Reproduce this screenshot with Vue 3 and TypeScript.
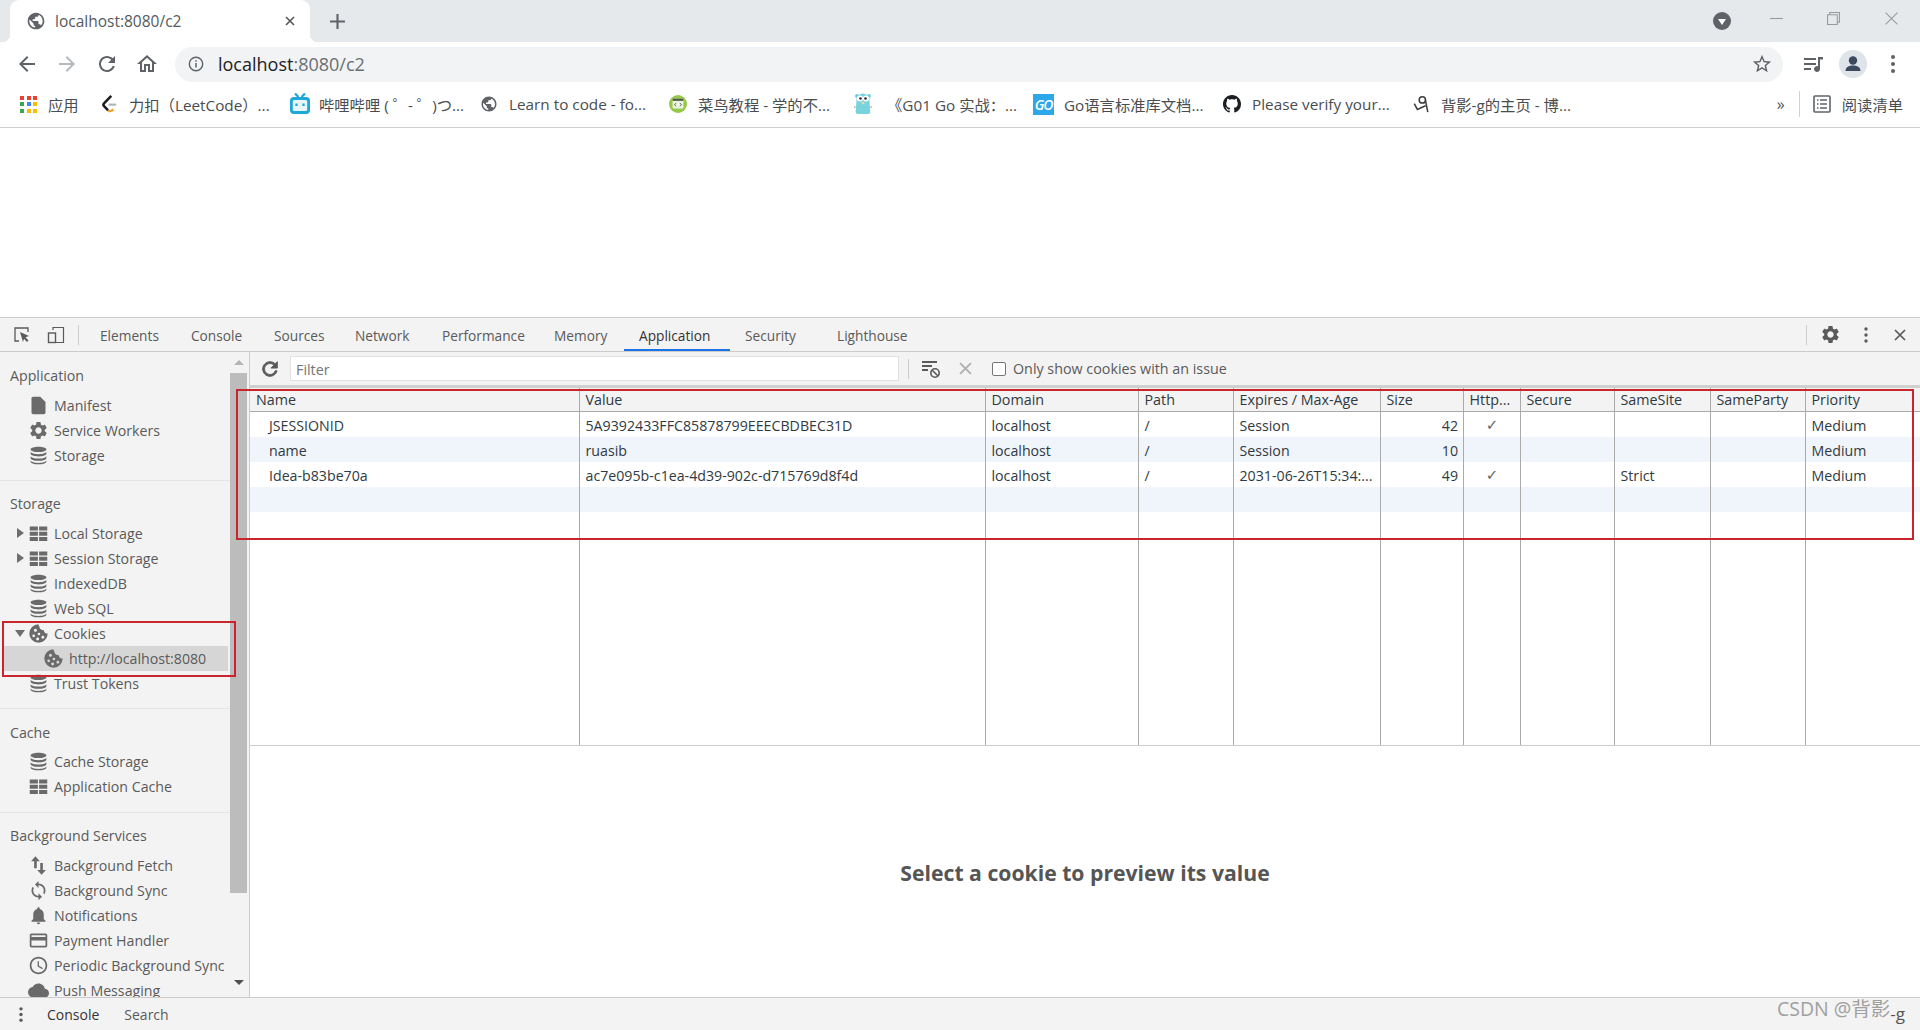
<script setup lang="ts">
const P = {
  globe: 'M12 2C6.48 2 2 6.48 2 12s4.48 10 10 10 10-4.48 10-10S17.52 2 12 2zm-1 17.93c-3.95-.49-7-3.85-7-7.93 0-.62.08-1.21.21-1.79L9 15v1c0 1.1.9 2 2 2v1.93zm6.9-2.54c-.26-.81-1-1.39-1.9-1.39h-1v-3c0-.55-.45-1-1-1H8v-2h2c.55 0 1-.45 1-1V7h2c1.1 0 2-.9 2-2v-.41c2.93 1.19 5 4.06 5 7.41 0 2.08-.8 3.97-2.1 5.39z',
  refresh: 'M17.65 6.35C16.2 4.9 14.21 4 12 4c-4.42 0-7.99 3.58-7.99 8s3.57 8 7.99 8c3.73 0 6.84-2.55 7.73-6h-2.08c-.82 2.33-3.04 4-5.65 4-3.31 0-6-2.69-6-6s2.69-6 6-6c1.66 0 3.14.69 4.22 1.78L13 11h7V4l-2.35 2.35z',
  home: 'M12 5.69l5 4.5V18h-2v-6H9v6H7v-7.81l5-4.5M12 3L2 12h3v8h6v-6h2v6h6v-8h3L12 3z',
  star: 'M22 9.24l-7.19-.62L12 2 9.19 8.63 2 9.24l5.46 4.73L5.82 21 12 17.27 18.18 21l-1.63-7.03L22 9.24zM12 15.4l-3.76 2.27 1-4.28-3.32-2.88 4.38-.38L12 6.1l1.71 4.04 4.38.38-3.32 2.88 1 4.28L12 15.4z',
  gear: 'M19.14 12.94c.04-.3.06-.61.06-.94 0-.32-.02-.64-.07-.94l2.03-1.58a.49.49 0 0 0 .12-.61l-1.92-3.32a.488.488 0 0 0-.59-.22l-2.39.96c-.5-.38-1.03-.7-1.62-.94l-.36-2.54a.484.484 0 0 0-.48-.41h-3.84c-.24 0-.43.17-.47.41l-.36 2.54c-.59.24-1.13.57-1.62.94l-2.39-.96c-.22-.08-.47 0-.59.22L2.74 8.87c-.12.21-.08.47.12.61l2.03 1.58c-.05.3-.09.63-.09.94s.02.64.07.94l-2.03 1.58a.49.49 0 0 0-.12.61l1.92 3.32c.12.22.37.29.59.22l2.39-.96c.5.38 1.03.7 1.62.94l.36 2.54c.05.24.24.41.48.41h3.84c.24 0 .44-.17.47-.41l.36-2.54c.59-.24 1.13-.56 1.62-.94l2.39.96c.22.08.47 0 .59-.22l1.92-3.32c.12-.22.07-.47-.12-.61l-2.01-1.58zM12 15.6c-1.98 0-3.6-1.62-3.6-3.6s1.62-3.6 3.6-3.6 3.6 1.62 3.6 3.6-1.62 3.6-3.6 3.6z',
  file: 'M14 2H6c-1.1 0-2 .9-2 2v16c0 1.1.9 2 2 2h12c1.1 0 2-.9 2-2V8l-6-6z',
  db: 'M12 2C7 2 3 3.3 3 5s4 3 9 3 9-1.3 9-3-4-3-9-3zM3 7.5V10c0 1.7 4 3 9 3s9-1.3 9-3V7.5c0 1.7-4 3-9 3s-9-1.3-9-3zM3 12.5V15c0 1.7 4 3 9 3s9-1.3 9-3v-2.5c0 1.7-4 3-9 3s-9-1.3-9-3zM3 17.5V19c0 1.7 4 3 9 3s9-1.3 9-3v-1.5c0 1.7-4 3-9 3s-9-1.3-9-3z',
  table: 'M2 4h9.3v4.6H2zM12.7 4H22v4.6h-9.3zM2 10h9.3v4.6H2zM12.7 10H22v4.6h-9.3zM2 16h9.3v4.6H2zM12.7 16H22v4.6h-9.3z',
  cookie: 'M12 1.500a10.500 10.500 0 1 0 10.500 10.500 4 4 0 0 1-4.500-4 4 4 0 0 1-5-4 3 3 0 0 1-1-2.500zM8.500 6.500a1.800 1.800 0 1 0 0 3.600 1.800 1.800 0 0 0 0-3.600zM6.500 13a1.600 1.600 0 1 0 0 3.200 1.600 1.600 0 0 0 0-3.200zM12.500 11a1.500 1.500 0 1 0 0 3 1.500 1.500 0 0 0 0-3zM11 16.500a1.700 1.700 0 1 0 0 3.400 1.700 1.700 0 0 0 0-3.400zM17 14.500a1.700 1.700 0 1 0 0 3.400 1.700 1.700 0 0 0 0-3.400z',
  fetch: 'M17 17v-8h-3v8h-3.500l5 5.500 5-5.500zM8.500 1.500l-5 5.500H7v8h3V7h3.500z',
  sync: 'M12 4V1L8 5l4 4V6c3.31 0 6 2.69 6 6 0 1.01-.25 1.97-.7 2.8l1.46 1.46C19.54 15.03 20 13.57 20 12c0-4.42-3.58-8-8-8zm0 14c-3.31 0-6-2.69-6-6 0-1.01.25-1.97.7-2.8L5.24 7.74C4.46 8.97 4 10.43 4 12c0 4.42 3.58 8 8 8v3l4-4-4-4v3z',
  bell: 'M12 22c1.1 0 2-.9 2-2h-4c0 1.1.89 2 2 2zm6-6v-5c0-3.07-1.64-5.64-4.5-6.32V4c0-.83-.67-1.5-1.5-1.5s-1.5.67-1.5 1.5v.68C7.63 5.36 6 7.92 6 11v5l-2 2v1h16v-1l-2-2z',
  card: 'M20 4H4c-1.11 0-1.99.89-1.99 2L2 18c0 1.11.89 2 2 2h16c1.11 0 2-.89 2-2V6c0-1.11-.89-2-2-2zm0 14H4v-6h16v6zm0-10H4V6h16v2z',
  clock: 'M11.99 2C6.47 2 2 6.48 2 12s4.47 10 9.99 10C17.52 22 22 17.52 22 12S17.52 2 11.99 2zM12 20c-4.42 0-8-3.58-8-8s3.58-8 8-8 8 3.58 8 8-3.58 8-8 8zm.5-13H11v6l5.25 3.15.75-1.23-4.5-2.67z',
  cloud: 'M19.35 10.04C18.67 6.59 15.64 4 12 4 9.11 4 6.6 5.64 5.35 8.04 2.34 8.36 0 10.91 0 14c0 3.31 2.69 6 6 6h13c2.76 0 5-2.24 5-5 0-2.64-2.05-4.78-4.65-4.96z',
  github: 'M8 0C3.58 0 0 3.58 0 8c0 3.54 2.29 6.53 5.47 7.59.4.07.55-.17.55-.38 0-.19-.01-.82-.01-1.49-2.01.37-2.53-.49-2.69-.94-.09-.23-.48-.94-.82-1.13-.28-.15-.68-.52-.01-.53.63-.01 1.08.58 1.23.82.72 1.21 1.87.87 2.33.66.07-.52.28-.87.51-1.07-1.78-.2-3.64-.89-3.64-3.95 0-.87.31-1.59.82-2.15-.08-.2-.36-1.02.08-2.12 0 0 .67-.21 2.2.82.64-.18 1.32-.27 2-.27.68 0 1.36.09 2 .27 1.53-1.04 2.2-.82 2.2-.82.44 1.1.16 1.92.08 2.12.51.56.82 1.27.82 2.15 0 3.07-1.87 3.75-3.65 3.95.29.25.54.73.54 1.48 0 1.07-.01 1.93-.01 2.2 0 .21.15.46.55.38A8.013 8.013 0 0016 8c0-4.42-3.58-8-8-8z',
}

const appDots = ['#ea4335', '#ea4335', '#ea4335', '#34a853', '#4285f4', '#fbbc05', '#34a853', '#fbbc05', '#fbbc05']

const bookmarks = [
  { kind: 'leet', text: '力扣（LeetCode）...', w: 189 },
  { kind: 'bili', text: '哔哩哔哩 ( ゜- ゜)つ...', w: 191 },
  { kind: 'globe', text: 'Learn to code - fo...', w: 189 },
  { kind: 'runoob', text: '菜鸟教程 - 学的不...', w: 184 },
  { kind: 'gopher', text: '《G01 Go 实战：...', w: 180 },
  { kind: 'go', text: 'Go语言标准库文档...', w: 190 },
  { kind: 'github', text: 'Please verify your...', w: 189 },
  { kind: 'ink', text: '背影-g的主页 - 博...', w: 200 },
]

const tabs = [
  { t: 'Elements', w: 91 }, { t: 'Console', w: 83 }, { t: 'Sources', w: 81 }, { t: 'Network', w: 87 },
  { t: 'Performance', w: 112 }, { t: 'Memory', w: 85 }, { t: 'Application', w: 106, active: true },
  { t: 'Security', w: 92 }, { t: 'Lighthouse', w: 106 },
]

interface Item { t: string; i: keyof typeof P; arrow?: string; child?: boolean; sel?: boolean }
const sections: { title: string; items: Item[] }[] = [
  { title: 'Application', items: [
    { t: 'Manifest', i: 'file' }, { t: 'Service Workers', i: 'gear' }, { t: 'Storage', i: 'db' },
  ] },
  { title: 'Storage', items: [
    { t: 'Local Storage', i: 'table', arrow: 'right' }, { t: 'Session Storage', i: 'table', arrow: 'right' },
    { t: 'IndexedDB', i: 'db' }, { t: 'Web SQL', i: 'db' }, { t: 'Cookies', i: 'cookie', arrow: 'down' },
    { t: 'http://localhost:8080', i: 'cookie', child: true, sel: true }, { t: 'Trust Tokens', i: 'db' },
  ] },
  { title: 'Cache', items: [
    { t: 'Cache Storage', i: 'db' }, { t: 'Application Cache', i: 'table' },
  ] },
  { title: 'Background Services', items: [
    { t: 'Background Fetch', i: 'fetch' }, { t: 'Background Sync', i: 'sync' }, { t: 'Notifications', i: 'bell' },
    { t: 'Payment Handler', i: 'card' }, { t: 'Periodic Background Sync', i: 'clock' }, { t: 'Push Messaging', i: 'cloud' },
  ] },
]

const cols = [329, 406, 153, 95, 147, 83, 57, 94, 96, 95, 115]
const heads = ['Name', 'Value', 'Domain', 'Path', 'Expires / Max-Age', 'Size', 'Http...', 'Secure', 'SameSite', 'SameParty', 'Priority']
const rows = [
  ['JSESSIONID', '5A9392433FFC85878799EEECBDBEC31D', 'localhost', '/', 'Session', '42', '✓', '', '', '', 'Medium'],
  ['name', 'ruasib', 'localhost', '/', 'Session', '10', '', '', '', '', 'Medium'],
  ['Idea-b83be70a', 'ac7e095b-c1ea-4d39-902c-d715769d8f4d', 'localhost', '/', '2031-06-26T15:34:...', '49', '✓', '', 'Strict', '', 'Medium'],
  ['', '', '', '', '', '', '', '', '', '', ''],
  ['', '', '', '', '', '', '', '', '', '', ''],
]
</script>

<template>
  <div class="window">
    <div class="tabstrip">
      <div class="tab">
        <svg class="fav" viewBox="0 0 24 24"><circle cx="12" cy="12" r="10" fill="#fff" /><path :d="P.globe" fill="#5f6368" /></svg>
        <span class="tab-title">localhost:8080/c2</span>
        <svg class="tab-x" viewBox="0 0 12 12"><path d="M2 2l8 8M10 2l-8 8" stroke="#555" stroke-width="1.6" /></svg>
      </div>
      <svg class="newtab" viewBox="0 0 16 16"><path d="M8 1v14M1 8h14" stroke="#5f6368" stroke-width="2" /></svg>
      <div class="grow"></div>
      <svg class="profile-menu" viewBox="0 0 20 20"><circle cx="10" cy="10" r="9" fill="#5f6368" /><path d="M6 8h8l-4 6z" fill="#fff" /></svg>
      <div class="winbtn"><svg viewBox="0 0 12 12"><path d="M0 6h12" stroke="#999" /></svg></div>
      <div class="winbtn"><svg viewBox="0 0 12 12"><path d="M.5 2.5h9v9h-9zM2.5 2.5v-2h9v9h-2" fill="none" stroke="#999" /></svg></div>
      <div class="winbtn"><svg viewBox="0 0 12 12"><path d="M.5.5l11 11M11.500.5l-11 11" stroke="#999" /></svg></div>
    </div>

    <div class="toolbar">
      <div class="navbtn"><svg viewBox="0 0 24 24"><path d="M20 11H7.8l5.6-5.6L12 4l-8 8 8 8 1.4-1.4L7.8 13H20z" fill="#5f6368" /></svg></div>
      <div class="navbtn"><svg viewBox="0 0 24 24"><path d="M4 11h12.200l-5.600-5.600L12 4l8 8-8 8-1.400-1.400 5.600-5.600H4z" fill="#b6b9bc" /></svg></div>
      <div class="navbtn"><svg viewBox="0 0 24 24"><path :d="P.refresh" fill="#5f6368" /></svg></div>
      <div class="navbtn"><svg viewBox="0 0 24 24"><path :d="P.home" fill="#5f6368" /></svg></div>
      <div class="omnibox">
        <svg class="info" viewBox="0 0 16 16"><circle cx="8" cy="8" r="6.700" fill="none" stroke="#5f6368" stroke-width="1.400" /><path d="M8 7v4.500M8 4.300v1.500" stroke="#5f6368" stroke-width="1.500" /></svg>
        <span class="url"><b>localhost</b>:8080/c2</span>
        <div class="grow"></div>
        <svg class="star" viewBox="0 0 24 24"><path :d="P.star" fill="#5f6368" /></svg>
      </div>
      <div class="navbtn first-right">
        <svg viewBox="0 0 24 24"><path d="M3 6h12v2H3zM3 11h12v2H3zM3 16h7v2H3zM17 5h5v2.500h-3V17a3 3 0 1 1-2-2.800z" fill="#5f6368" /></svg>
      </div>
      <div class="navbtn">
        <svg class="avatar" viewBox="0 0 28 28"><circle cx="14" cy="14" r="14" fill="#dfe3ea" /><circle cx="14" cy="10.500" r="4.200" fill="#3c4a5f" /><path d="M6.500 21c0-4 3.500-5.500 7.500-5.500s7.500 1.500 7.500 5.500z" fill="#3c4a5f" /></svg>
      </div>
      <div class="navbtn"><svg viewBox="0 0 24 24"><circle cx="12" cy="5" r="2" fill="#5f6368" /><circle cx="12" cy="12" r="2" fill="#5f6368" /><circle cx="12" cy="19" r="2" fill="#5f6368" /></svg></div>
    </div>

    <div class="bookmarks">
      <div class="bm bm-apps">
        <div class="apps"><i v-for="(c, n) in appDots" :key="n" :style="{ background: c }"></i></div>
        <span>应用</span>
      </div>
      <div v-for="b in bookmarks" :key="b.text" class="bm" :style="{ width: b.w + 'px' }">
        <svg v-if="b.kind === 'leet'" class="bi" viewBox="0 0 20 20"><path d="M12.500 1L4.500 9.200Q3 10.800 4.500 12.400L9 17" fill="none" stroke="#1c1c1c" stroke-width="2.800" /><path d="M9 17Q11.500 19.300 15 16" fill="none" stroke="#f0a32f" stroke-width="2.600" /><path d="M9.500 10.700h8.500" stroke="#b4b4b4" stroke-width="2.400" /></svg>
        <svg v-else-if="b.kind === 'bili'" class="bi bili" viewBox="0 0 22 22"><path d="M6 .5l3.500 3.500M16 .5L12.500 4" stroke="#1fa7d8" stroke-width="2.200" /><rect x="1" y="4" width="20" height="17" rx="4" fill="#1fa7d8" /><rect x="3.800" y="7" width="14.400" height="11" rx="1.500" fill="#e7f6fb" /><path d="M7.500 10.500v2.500M14.500 10.500v2.500" stroke="#1fa7d8" stroke-width="2.200" /></svg>
        <svg v-else-if="b.kind === 'globe'" class="bi" viewBox="0 0 24 24"><circle cx="12" cy="12" r="10" fill="#fff" /><path :d="P.globe" fill="#5f6368" /></svg>
        <svg v-else-if="b.kind === 'runoob'" class="bi" viewBox="0 0 20 20"><circle cx="10" cy="10" r="10" fill="#96c84a" /><rect x="4" y="4" width="12" height="11" rx="1" fill="#eef4e4" /><rect x="4" y="4" width="12" height="2.500" fill="#4c5b3b" /><path d="M8 9l-2 1.700L8 12.500M12 9l2 1.700-2 1.800" fill="none" stroke="#4c5b3b" /></svg>
        <svg v-else-if="b.kind === 'gopher'" class="bi gopher" viewBox="0 0 20 24"><circle cx="4" cy="4" r="2" fill="#6fcfdc" /><circle cx="16" cy="4" r="2" fill="#6fcfdc" /><path d="M3.500 8a6.500 6.500 0 0 1 13 0l.8 12a2 2 0 0 1-2 2H4.700a2 2 0 0 1-2-2z" fill="#78d3df" /><circle cx="7" cy="6.500" r="3" fill="#fff" /><circle cx="13" cy="6.500" r="3" fill="#fff" /><circle cx="7.500" cy="6.500" r="1.300" fill="#1f2a30" /><circle cx="12.500" cy="6.500" r="1.300" fill="#1f2a30" /><path d="M8.700 10h2.600v2.200H8.700z" fill="#e8d6b0" /><path d="M2.500 15H1M17.500 15H19" stroke="#b9ab8d" stroke-width="1.500" /></svg>
        <span v-else-if="b.kind === 'go'" class="go-logo">GO</span>
        <svg v-else-if="b.kind === 'github'" class="bi" viewBox="0 0 16 16"><path :d="P.github" fill="#1b1f23" /></svg>
        <svg v-else class="bi" viewBox="0 0 20 20"><circle cx="11.500" cy="5.500" r="3.500" fill="none" stroke="#3c3c3c" stroke-width="1.700" /><path d="M15 6l2.500 13M2.500 9.500l3.500 6.500 9-4" fill="none" stroke="#3c3c3c" stroke-width="1.700" /></svg>
        <span>{{ b.text }}</span>
      </div>
      <div class="grow"></div>
      <span class="more">»</span>
      <i class="bm-sep"></i>
      <svg class="reading" viewBox="0 0 18 18"><rect x="1" y="1" width="16" height="16" rx="1" fill="none" stroke="#5f6368" stroke-width="1.600" /><path d="M4 5h1.500M7 5h7M4 9h1.500M7 9h7M4 13h1.500M7 13h7" stroke="#5f6368" stroke-width="1.400" /></svg>
      <span class="reading-label">阅读清单</span>
    </div>

    <div class="page"></div>

    <div class="devtools">
      <div class="dt-tabs">
        <svg class="dt-ic inspect" viewBox="0 0 18 18"><path d="M6 15H2V2h13v4" fill="none" stroke="#5a5a5a" stroke-width="1.300" /><path d="M7 6l9 4-3.500 1.300 3 3.200-1.500 1.500-3-3.200L10 16z" fill="#5a5a5a" /></svg>
        <svg class="dt-ic device" viewBox="0 0 18 18"><path d="M6 4V1.500h10.500v15H6" fill="none" stroke="#5a5a5a" stroke-width="1.200" /><rect x="1.500" y="7" width="7" height="9.500" fill="none" stroke="#5a5a5a" stroke-width="1.400" /></svg>
        <i class="dt-sep"></i>
        <div v-for="t in tabs" :key="t.t" class="dt-tab" :class="{ active: t.active }" :style="{ width: t.w + 'px' }">{{ t.t }}</div>
        <div class="grow"></div>
        <i class="dt-sep right"></i>
        <svg class="dt-act gear" viewBox="0 0 24 24"><path :d="P.gear" fill="#5a5a5a" /></svg>
        <svg class="dt-act dots" viewBox="0 0 6 18"><circle cx="3" cy="3" r="1.700" fill="#5a5a5a" /><circle cx="3" cy="9" r="1.700" fill="#5a5a5a" /><circle cx="3" cy="15" r="1.700" fill="#5a5a5a" /></svg>
        <svg class="dt-act closer" viewBox="0 0 12 12"><path d="M1 1l10 10M11 1L1 11" stroke="#5a5a5a" stroke-width="1.700" /></svg>
      </div>

      <div class="main">
        <aside class="sidebar">
          <div class="side-content">
            <section v-for="s in sections" :key="s.title" class="side-sec">
              <h4>{{ s.title }}</h4>
              <div v-for="it in s.items" :key="it.t" class="side-item" :class="{ child: it.child, sel: it.sel }">
                <i class="arrow" :class="it.arrow"></i>
                <svg class="side-ic" viewBox="0 0 24 24"><path :d="P[it.i]" fill="#6a6a6a" fill-rule="evenodd" /></svg>
                <span>{{ it.t }}</span>
              </div>
            </section>
          </div>
          <div class="scrollbar">
            <div class="sb-btn"><i class="sb-up"></i></div>
            <div class="sb-thumb"></div>
            <div class="grow"></div>
            <div class="sb-btn low"><i class="sb-down"></i></div>
          </div>
        </aside>

        <div class="content">
          <div class="filterbar">
            <svg class="f-refresh" viewBox="0 0 24 24"><path :d="P.refresh" fill="#5a5a5a" stroke="#5a5a5a" stroke-width="1" /></svg>
            <div class="f-input">Filter</div>
            <i class="f-sep"></i>
            <svg class="f-clear" viewBox="0 0 20 20"><path d="M1 3h15M1 7h10M1 11h6" stroke="#5a5a5a" stroke-width="2" /><circle cx="14" cy="14" r="4.200" fill="none" stroke="#5a5a5a" stroke-width="1.600" /><path d="M11 11l6 6" stroke="#5a5a5a" stroke-width="1.600" /></svg>
            <svg class="f-x" viewBox="0 0 12 12"><path d="M1 1l10 10M11 1L1 11" stroke="#b0b0b0" stroke-width="1.800" /></svg>
            <i class="f-check"></i>
            <span class="f-label">Only show cookies with an issue</span>
          </div>

          <table class="cookies">
            <colgroup><col v-for="(c, n) in cols" :key="n" :style="{ width: c + 'px' }" /></colgroup>
            <thead><tr><th v-for="h in heads" :key="h">{{ h }}</th></tr></thead>
            <tbody>
              <tr v-for="(r, n) in rows" :key="n">
                <td v-for="(c, k) in r" :key="k" :class="{ nm: k === 0, num: k === 5, chk: k === 6 }">{{ c }}</td>
              </tr>
              <tr class="filler"><td v-for="(c, n) in cols" :key="n"></td></tr>
            </tbody>
          </table>

          <div class="preview">Select a cookie to preview its value</div>
        </div>

        <div class="mark mark-table"></div>
        <div class="mark mark-cookies"></div>
      </div>

      <div class="drawer">
        <svg class="dr-dots" viewBox="0 0 6 18"><circle cx="3" cy="3" r="1.800" fill="#5a5a5a" /><circle cx="3" cy="9" r="1.800" fill="#5a5a5a" /><circle cx="3" cy="15" r="1.800" fill="#5a5a5a" /></svg>
        <span class="dr-tab">Console</span>
        <span class="dr-tab">Search</span>
        <span class="watermark">CSDN @背影<span class="wm-tail">-g</span></span>
      </div>
    </div>
  </div>
</template>

<style scoped>
.window { width: 1920px; height: 1030px; display: flex; flex-direction: column; overflow: hidden; background: #fff; font-family: "Open Sans", "Noto Sans CJK SC", sans-serif; }
.grow { flex: 1; }

.tabstrip { height: 42px; background: #e6e9ec; display: flex; align-items: center; padding-left: 10px; flex: none; }
.tab { position: relative; width: 300px; height: 42px; background: #fff; border-radius: 9px 9px 0 0; display: flex; align-items: center; padding: 0 14px 0 16px; box-sizing: border-box; }
.tab::after { content: ""; position: absolute; right: -8px; bottom: 0; width: 8px; height: 8px; background: radial-gradient(circle at 100% 0, transparent 8px, #fff 8.5px); }
.tab::before { content: ""; position: absolute; left: -8px; bottom: 0; width: 8px; height: 8px; background: radial-gradient(circle at 0 0, transparent 8px, #fff 8.5px); }
.fav { width: 20px; height: 20px; }
.tab-title { font-size: 15.500px; color: #55595e; margin-left: 9px; flex: 1; }
.tab-x { width: 12px; height: 12px; }
.newtab { width: 17px; height: 17px; margin-left: 19px; }
.profile-menu { width: 20px; height: 20px; margin-right: 16px; }
.winbtn { width: 57.500px; display: flex; justify-content: center; margin-top: -6px; }
.winbtn svg { width: 13px; height: 13px; }

.toolbar { height: 42px; display: flex; align-items: center; padding: 2px 0 0 7px; box-sizing: border-box; flex: none; background: #fff; }
.navbtn { width: 40px; display: flex; justify-content: center; align-items: center; flex: none; }
.navbtn svg { width: 24px; height: 24px; }
.navbtn svg.avatar { width: 28px; height: 28px; }
.first-right { margin-left: 10px; }
.omnibox { width: 1608px; height: 35px; margin-left: 8px; border-radius: 18px; background: #f1f3f4; display: flex; align-items: center; padding: 0 10px 0 13px; box-sizing: border-box; flex: none; }
.info { width: 16px; height: 16px; margin-right: 14px; }
.url { font-size: 18px; color: #6a6e73; }
.url b { font-weight: 400; color: #202124; }
.star { width: 22px; height: 22px; }

.bookmarks { height: 44px; border-bottom: 1px solid #cfcfcf; box-sizing: border-box; display: flex; align-items: center; padding: 0 17px 3px 20px; font-size: 15.300px; color: #4a4d50; flex: none; }
.bm { display: flex; align-items: center; flex: none; white-space: nowrap; }
.bm-apps { width: 80px; gap: 11px; }
.apps { width: 17px; height: 17px; display: grid; grid-template-columns: repeat(3, 4px); gap: 2.500px; }
.apps i { width: 4px; height: 4px; }
.bi { width: 18px; height: 20px; margin-right: 11px; flex: none; }
.bili { width: 22px; height: 22px; margin-right: 8px; }
.gopher { width: 20px; height: 24px; margin-right: 14px; }
.go-logo { width: 21px; height: 21px; background: #2ba7ea; color: #fff; font-size: 14px; font-style: italic; font-weight: 600; display: flex; align-items: center; justify-content: center; margin-right: 10px; flex: none; letter-spacing: -1px; }
.more { font-size: 16px; color: #555; }
.bm-sep { width: 1px; height: 26px; background: #d0d0d0; margin: 0 13px 0 14px; }
.reading { width: 18px; height: 18px; margin-right: 11px; }
.reading-label { white-space: nowrap; }

.page { height: 189px; flex: none; background: #fff; }

.devtools { flex: 1; display: flex; flex-direction: column; min-height: 0; border-top: 1px solid #ccc; background: #f3f3f3; font-size: 13.700px; color: #5a5a5a; }
.dt-tabs { height: 34px; border-bottom: 1px solid #ccc; box-sizing: border-box; display: flex; align-items: center; flex: none; }
.dt-ic { width: 18px; height: 18px; flex: none; }
.inspect { margin-left: 13px; }
.device { margin-left: 16px; }
.dt-sep { width: 1px; height: 20px; background: #ccc; margin-left: 13px; margin-right: 6px; flex: none; }
.dt-sep.right { margin: 0; }
.dt-tab { height: 33px; line-height: 35px; box-sizing: border-box; padding-left: 15px; white-space: nowrap; flex: none; }
.dt-tab.active { border-bottom: 2px solid #1a73e8; color: #333; }
.dt-act { flex: none; }
.gear { width: 21px; height: 21px; margin-left: 13px; }
.dots { width: 6px; height: 18px; margin-left: 22px; }
.closer { width: 12px; height: 12px; margin: 0 14px 0 25px; }

.main { position: relative; flex: 1; display: flex; min-height: 0; }
.sidebar { width: 250px; flex: none; display: flex; border-right: 1px solid #ccc; box-sizing: border-box; overflow: hidden; font-size: 14.200px; }
.side-content { width: 230px; flex: none; overflow: hidden; }
.side-sec { border-bottom: 1px solid #e4e4e4; padding-bottom: 12.500px; }
.side-sec:first-child { padding-bottom: 11.500px; }
.side-sec:first-child h4 { height: 41px; padding-top: 12px; }
h4 { margin: 0; height: 40px; box-sizing: border-box; padding-top: 11.500px; line-height: 24px; font-weight: 400; font-size: 14.200px; color: #5a5a5a; padding-left: 10px; white-space: nowrap; }
.side-item { display: flex; align-items: center; height: 25px; padding-left: 14px; white-space: nowrap; overflow: hidden; width: 224px; box-sizing: border-box; }
.side-item.child { padding-left: 29px; }
.side-item.sel { background: #d6d6d6; margin-left: 3px; width: 225px; padding-left: 26px; }
.arrow { width: 12px; height: 12px; flex: none; margin-right: 1.500px; position: relative; }
.arrow.right::after { content: ""; position: absolute; left: 3px; top: 1px; border-left: 7px solid #6e6e6e; border-top: 5px solid transparent; border-bottom: 5px solid transparent; }
.arrow.down::after { content: ""; position: absolute; left: 1px; top: 3px; border-top: 7px solid #6e6e6e; border-left: 5px solid transparent; border-right: 5px solid transparent; }
.side-ic { width: 21px; height: 21px; flex: none; margin-right: 5.500px; }
.scrollbar { width: 17px; flex: none; display: flex; flex-direction: column; align-items: stretch; }
.sb-btn { height: 21px; display: flex; justify-content: center; align-items: center; flex: none; }
.sb-btn.low { height: 24px; align-items: flex-start; }
.sb-up { border-bottom: 5px solid #b5b5b5; border-left: 5px solid transparent; border-right: 5px solid transparent; }
.sb-down { border-top: 5px solid #505050; border-left: 5px solid transparent; border-right: 5px solid transparent; margin-top: 7px; }
.sb-thumb { height: 520px; background: #bcbcbc; flex: none; }

.content { flex: 1; display: flex; flex-direction: column; min-width: 0; }
.filterbar { height: 36px; box-sizing: border-box; border-bottom: 3px solid #d0d0d0; display: flex; align-items: center; flex: none; font-size: 14.300px; }
.f-refresh { width: 22px; height: 22px; margin-left: 9px; flex: none; }
.f-input { width: 609px; height: 25px; line-height: 25px; background: #fff; border: 1px solid #e2e2e2; box-sizing: border-box; margin-left: 9px; padding-left: 5px; color: #757575; flex: none; }
.f-sep { width: 1px; height: 20px; background: #ccc; margin-left: 9px; flex: none; }
.f-clear { width: 20px; height: 20px; margin-left: 12px; flex: none; }
.f-x { width: 13px; height: 13px; margin-left: 18px; flex: none; }
.f-check { width: 12px; height: 12px; border: 1px solid #767676; border-radius: 2px; background: #fff; margin-left: 20px; flex: none; }
.f-label { margin-left: 7px; white-space: nowrap; }

.cookies { width: 1670px; table-layout: fixed; border-collapse: separate; border-spacing: 0; background: #fff; color: #303942; font-size: 14.200px; flex: none; border-bottom: 1px solid #ccc; }
.cookies th { height: 24px; background: #f3f3f3; font-weight: 400; font-size: 14.300px; text-align: left; padding: 0 0 0 5.500px; border-left: 1px solid #aaa; border-bottom: 1px solid #aaa; box-sizing: border-box; white-space: nowrap; overflow: hidden; }
.cookies td { height: 25px; padding: 1px 0 0 5.500px; border-left: 1px solid #aaa; box-sizing: border-box; white-space: nowrap; overflow: hidden; }
.cookies th:first-child, .cookies td:first-child { border-left: 0; padding-left: 6px; }
.cookies tbody tr:nth-child(even) td { background: #f0f4fb; }
.cookies td.nm { padding-left: 19px; }
.cookies td.num { text-align: right; padding-right: 5px; }
.cookies td.chk { text-align: center; padding: 0; font-family: "DejaVu Sans", sans-serif; font-size: 15px; color: #666; }
.cookies tbody tr.filler td { height: 208px; background: #fff; }

.preview { flex: 1; background: #fff; display: flex; align-items: center; justify-content: center; padding-top: 2px; font-size: 21.200px; font-weight: 700; color: #555; }

.mark { position: absolute; border: 2px solid #c9252c; box-sizing: border-box; pointer-events: none; }
.mark-table { left: 236px; top: 37px; width: 1678px; height: 151px; }
.mark-cookies { left: 2px; top: 269px; width: 234px; height: 56px; }

.drawer { position: relative; height: 33px; border-top: 1px solid #ccc; box-sizing: border-box; display: flex; align-items: center; flex: none; color: #333; font-size: 14px; }
.dr-dots { width: 6px; height: 17px; margin-left: 18px; flex: none; }
.dr-tab { margin-left: 23px; }
.dr-tab + .dr-tab { margin-left: 25px; color: #5a5a5a; }
.watermark { position: absolute; left: 1777px; top: -5px; font-size: 19.500px; color: #a0a0a0; white-space: nowrap; }
.wm-tail { color: #555; font-size: 17px; vertical-align: -4px; }
</style>

<style>
html, body { margin: 0; padding: 0; overflow: hidden; background: #fff; }
</style>
